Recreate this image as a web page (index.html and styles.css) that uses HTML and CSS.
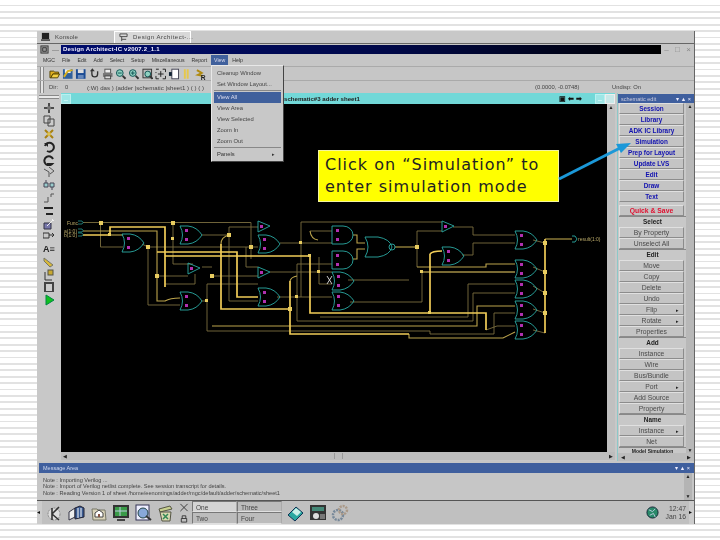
FILE: index.html
```html
<!DOCTYPE html>
<html lang="en">
<head>
<meta charset="utf-8">
<title>Design Architect-IC</title>
<link rel="stylesheet" href="styles.css">
</head>
<body>
<div class="window">
  <div class="tabs">
    <div class="tab"><svg class="ico" viewBox="0 0 10 10"><rect x="1" y="1" width="8" height="7" fill="#222"/><rect x="0" y="8" width="10" height="2" fill="#555"/></svg><span>Konsole</span></div>
    <div class="tab active"><svg class="ico" viewBox="0 0 10 10"><path d="M1 1h8v3H1zM3 4v5M3 7h5" fill="none" stroke="#444"/></svg><span>Design Architect-...</span></div>
  </div>
  <div class="titlebar">
    <svg class="ico" viewBox="0 0 10 10"><rect x="1" y="1" width="8" height="8" fill="#999" stroke="#333"/><path d="M3 3h4v4H3z" fill="none" stroke="#333"/></svg>
    <span class="dash">—</span>
    <div class="title">Design Architect-IC v2007.2_1.1</div>
    <div class="winbtns"><span>–</span><span>□</span><span>×</span></div>
  </div>
  <div class="menubar">
    <span>MGC</span><span>File</span><span>Edit</span><span>Add</span><span>Select</span><span>Setup</span><span>Miscellaneous</span><span>Report</span><span class="on">View</span><span>Help</span>
  </div>
  <div class="toolbar">
    <i class="grip"></i>
    <svg class="tool" viewBox="0 0 12 12"><path d="M1 3h4l1 1h4v2H4L2 10H1z" fill="#e0b020" stroke="#554400"/><path d="M4 6h7l-2 4H2z" fill="#f4d040" stroke="#554400"/></svg>
    <svg class="tool" viewBox="0 0 12 12"><rect x="1" y="1" width="10" height="10" fill="#30609c"/><rect x="3" y="1" width="6" height="4" fill="#eee"/><path d="M2 9l4-6 5-1" stroke="#d8b020" stroke-width="2" fill="none"/></svg>
    <svg class="tool" viewBox="0 0 12 12"><rect x="1" y="1" width="10" height="10" fill="#1c4c94"/><rect x="3" y="1" width="6" height="4" fill="#ddd"/><rect x="3" y="7" width="6" height="4" fill="#6688bb"/></svg>
    <svg class="tool" viewBox="0 0 12 12"><path d="M3 2v4a3 3 0 1 0 6 0V3" fill="none" stroke="#333" stroke-width="1.4"/><path d="M1 3h5L3.500 0z" fill="#333"/></svg>
    <svg class="tool" viewBox="0 0 12 12"><rect x="3" y="1" width="6" height="4" fill="#eee" stroke="#555"/><rect x="1" y="5" width="10" height="4" fill="#777"/><rect x="3" y="8" width="6" height="3" fill="#ddd" stroke="#444"/></svg>
    <svg class="tool" viewBox="0 0 12 12"><circle cx="5" cy="5" r="3.500" fill="#8fd0c0" stroke="#155"/><path d="M8 8l3 3" stroke="#333" stroke-width="2"/><path d="M3 5h4" stroke="#155"/></svg>
    <svg class="tool" viewBox="0 0 12 12"><circle cx="5" cy="5" r="3.500" fill="#8fd0c0" stroke="#155"/><path d="M8 8l3 3" stroke="#333" stroke-width="2"/><path d="M3 5h4M5 3v4" stroke="#155"/></svg>
    <svg class="tool" viewBox="0 0 12 12"><rect x="1" y="1" width="9" height="9" fill="#bbb" stroke="#333"/><circle cx="6" cy="6" r="3" fill="#8fd0c0" stroke="#155"/><path d="M8 8l3 3" stroke="#333" stroke-width="2"/></svg>
    <svg class="tool" viewBox="0 0 12 12"><path d="M1 1h3M8 1h3v3M11 8v3H8M4 11H1V8M1 4v1" fill="none" stroke="#222"/><path d="M6 3v6M3 6h6" stroke="#222"/></svg>
    <svg class="tool" viewBox="0 0 12 12"><rect x="4" y="1" width="7" height="10" fill="#fff" stroke="#445"/><path d="M1 4h3v4H1z" fill="#123"/></svg>
    <svg class="tool" viewBox="0 0 12 12"><path d="M4 1v10M7 1v10" stroke="#e6c84a" stroke-width="2"/></svg>
    <svg class="tool" viewBox="0 0 12 12"><path d="M2 2l5 3-4 2 5 1" fill="none" stroke="#b08a10" stroke-width="2"/><text x="6" y="12" class="r">R</text></svg>
  </div>
  <div class="statusbar">
    <i class="grip"></i>
    <span class="dir">Dir:</span><span class="zero">0</span><span class="path">(:W) das ) (adder |schematic |sheet1 ) ( ) ( )</span>
    <span class="coords">(0.0000, -0.0748)</span><span class="undo">Undisp: On</span>
  </div>
  <div class="main">
    <div class="iconbar">
      <div class="handle"></div>
      <svg class="vtool" viewBox="0 0 12 12"><path d="M6 1v10M1 6h10" stroke="#222" stroke-width="1.500"/><circle cx="6" cy="6" r="2" fill="#777"/></svg>
      <svg class="vtool" viewBox="0 0 12 12"><path d="M1 1h6v7H1zM5 4h6v7H5z" fill="#ccc" stroke="#444"/></svg>
      <svg class="vtool" viewBox="0 0 12 12"><path d="M2 2l8 8M10 2l-8 8" stroke="#a88010" stroke-width="2"/><circle cx="6" cy="6" r="2" fill="#dcc050"/></svg>
      <svg class="vtool" viewBox="0 0 12 12"><path d="M2 5a4.500 4.500 0 1 1 2 5" fill="none" stroke="#222" stroke-width="2"/><path d="M1 2h4v4z" fill="#222"/></svg>
      <svg class="vtool" viewBox="0 0 12 12"><path d="M10 5a4.500 4.500 0 1 0-1 5H4" fill="none" stroke="#222" stroke-width="2"/></svg>
      <svg class="vtool" viewBox="0 0 12 12"><path d="M1 3l5 3v5M6 1l5 4-4 3" fill="none" stroke="#555"/></svg>
      <svg class="vtool" viewBox="0 0 12 12"><path d="M1 4h4v4H1zM7 4h4v4H7zM3 1v3M9 8v3" fill="#9cc" stroke="#445"/></svg>
      <svg class="vtool" viewBox="0 0 12 12"><path d="M1 10h4V5M8 2h3M8 5V2" fill="none" stroke="#555"/></svg>
      <svg class="vtool" viewBox="0 0 12 12"><path d="M1 2h9v2H1zM3 8h7v2H3z" fill="#222"/></svg>
      <svg class="vtool" viewBox="0 0 12 12"><path d="M1 5h7v6H1z" fill="#77a" stroke="#334"/><path d="M4 8l6-6M9 1l2 2" stroke="#eee"/></svg>
      <svg class="vtool" viewBox="0 0 12 12"><path d="M0 3h6v5H0zM6 5h5M9 3l2 2-2 2" fill="none" stroke="#333"/></svg>
      <div class="vtext">A≡</div>
      <svg class="vtool" viewBox="0 0 12 12"><path d="M1 2l9 7-3 2-6-6z" fill="#d8b838" stroke="#776"/></svg>
      <svg class="vtool" viewBox="0 0 12 12"><path d="M2 3v8h7" fill="none" stroke="#333"/><rect x="5" y="1" width="5" height="5" fill="#c8a830" stroke="#554"/></svg>
      <svg class="vtool" viewBox="0 0 12 12"><rect x="1" y="1" width="10" height="10" fill="#444"/><rect x="3" y="3" width="6" height="7" fill="#ccc"/></svg>
      <svg class="vtool" viewBox="0 0 12 12"><path d="M3 1l8 5-8 5z" fill="#10c020" stroke="#084"/></svg>
    </div>
    <div class="design">
      <div class="dhead"><span class="minbtn">–</span><span class="dtitle">schematic#3 adder sheet1</span><span class="dctl"><b>▣</b><b>⬅</b><b>➡</b></span><span class="minbtn">–</span><span class="maxbtn"></span></div>
      <div class="dbody">
        <div class="canvas">
<svg class="schem" viewBox="61 105 546 348" aria-hidden="true">
  <defs>
    <g id="or"><path class="g" d="M0 0H8Q17 1 22 9Q17 17 8 18H0Q5 9 0 0Z"/><rect class="p" x="5" y="3" width="3" height="3"/><rect class="p" x="5" y="12" width="3" height="3"/></g>
    <g id="and"><path class="g" d="M0 0H11A10 9 0 0 1 11 18H0Z"/><rect class="p" x="4" y="3" width="3" height="3"/><rect class="p" x="4" y="12" width="3" height="3"/></g>
    <g id="buf"><path class="g" d="M0 0L12 5L0 11Z"/><rect class="p" x="2" y="4" width="3" height="3"/></g>
  </defs>
  <g class="thin">
    <path d="M83 223.500H251V260"/><path d="M100.500 223.500V248H123"/><path d="M173 224V265H193"/>
    <path d="M142 245L148 248V306H180"/><path d="M148 248H258"/><path d="M202 236H229M229 228V302H258M229 228H258"/>
    <path d="M202 268H212"/><path d="M157 277H188"/><path d="M165 285H195V275"/><path d="M212 277H258"/>
    <path d="M270 273H332"/><path d="M246 248V268H258"/><path d="M277 298H332"/><path d="M297 265V322H473"/><path d="M297 265H332"/>
    <path d="M202 302H208"/><path d="M207 285V332H430V335H494V314H515"/><path d="M207 285H258"/>
    <path d="M280 244H332"/><path d="M301 223V298"/><path d="M301 223H442"/><path d="M310 232H332"/>
    <path d="M319 258V285H332"/>
    <path d="M348 281H409"/><path d="M417 232V268"/><path d="M417 232H442"/>
    <path d="M453 228H473V236H515"/><path d="M462 256H473V244H515"/>
    <path d="M350 303H422V273H515"/><path d="M320 318H468V285H515"/><path d="M473 322V294H515"/>
    <path d="M533 241L545 244M533 268L545 273M533 287L545 294M533 310L545 314M533 331L545 334"/>
    <path d="M486 331L497 327H515"/>
    <path class="x" d="M327 277l5 8m-5 0l5-8"/>
  </g>
  <g class="mid">
    <path d="M83 232H157V302H165Q170 299 180 299"/>
    <path d="M212 327H477V307H515"/>
    <path d="M417 268H486V265H515"/><path d="M353 236H357V244H365M353 260H357V250H365"/>
    <path d="M395 248H417"/>
    <path d="M229 236Q221 238 221 245"/><path d="M290 282Q291 278 297 277"/>
    <path d="M409 335V339H503L515 333"/>
    <path d="M545 240H572"/>
    <path d="M109 236H123"/><path d="M422 273H515"/>
    <path d="M310 232Q311 240 318 241"/>
  </g>
  <g class="thick">
    <path d="M83 236H110V228H165V288"/><path d="M157 253H237V298H258"/><path d="M165 257H310V314H486V331"/>
    <path d="M221 245V310H290"/><path d="M290 282V335H409"/><path d="M430 255V314"/><path d="M430 255Q432 252 442 252"/>
    <path d="M545 240V334"/>
  </g>
  <g class="dots">
    <rect x="99" y="222" width="4" height="4"/><rect x="171" y="222" width="4" height="4"/><rect x="108" y="234" width="3" height="3"/><rect x="171" y="238" width="3" height="3"/>
    <rect x="146" y="246" width="4" height="4"/><rect x="227" y="234" width="4" height="4"/><rect x="249" y="246" width="4" height="4"/><rect x="155" y="275" width="4" height="4"/>
    <rect x="210" y="275" width="4" height="4"/><rect x="205" y="300" width="3" height="3"/><rect x="295" y="296" width="3" height="3"/><rect x="299" y="242" width="3" height="3"/>
    <rect x="288" y="308" width="4" height="4"/><rect x="317" y="271" width="3" height="3"/><rect x="308" y="255" width="3" height="3"/>
    <rect x="415" y="246" width="4" height="4"/><rect x="420" y="271" width="3" height="3"/><rect x="428" y="312" width="3" height="3"/>
    <rect x="543" y="242" width="4" height="4"/><rect x="543" y="271" width="4" height="4"/><rect x="543" y="292" width="4" height="4"/><rect x="543" y="312" width="4" height="4"/>
  </g>
  <g class="bufpin"><path d="M78 222h4l1 1.500-1 1.500h-4M78 230h4l1 1.500-1 1.500h-4M78 234h4l1 1.500-1 1.500h-4"/></g>
  <text class="lbl" x="67" y="226">Func</text><text class="lbl" x="64" y="233.500">a(1:0)</text><text class="lbl" x="64" y="238">b(1:0)</text>
  <use href="#or" x="122" y="235"/><use href="#or" x="180" y="227"/><use href="#or" x="180" y="293"/>
  <use href="#buf" x="188" y="264"/><use href="#buf" x="258" y="222"/><use href="#or" x="258" y="236"/>
  <use href="#buf" x="258" y="268"/><use href="#or" x="258" y="289"/>
  <use href="#and" x="332" y="227"/><use href="#and" x="332" y="252"/><use href="#or" x="332" y="273"/><use href="#or" x="332" y="293"/>
  <path class="g" d="M365 238H378Q390 240 392 248Q390 256 378 258H365Q371 248 365 238Z"/><circle class="g" cx="392" cy="248" r="3"/>
  <use href="#buf" x="442" y="222"/><use href="#or" x="442" y="248"/>
  <use href="#or" x="515" y="232"/><use href="#or" x="515" y="261"/><use href="#or" x="515" y="281"/><use href="#or" x="515" y="302"/><use href="#or" x="515" y="322"/>
  <path class="g" d="M572 237h3l2 3-2 3h-3"/>
  <text class="lbl" x="578" y="242">result(1:0)</text>
</svg>
        </div>
        <div class="vscroll"><b>▲</b><i></i></div>
      </div>
      <div class="hscroll"><b>◀</b><i></i><b>▶</b></div>
    </div>
    <div class="palette">
      <div class="phead"><span>schematic edit</span><em>▾ ▲ ×</em></div>
      <div class="pbody">
        <div class="plist">
          <div class="btn blue">Session</div><div class="btn blue">Library</div><div class="btn blue">ADK IC Library</div><div class="btn blue">Simulation</div><div class="btn blue">Prep for Layout</div><div class="btn blue">Update LVS</div><div class="btn blue">Edit</div><div class="btn blue">Draw</div><div class="btn blue">Text</div>
          <div class="btn red">Quick &amp; Save</div>
          <div class="sect">Select</div>
          <div class="btn">By Property</div><div class="btn">Unselect All</div>
          <div class="sect">Edit</div>
          <div class="btn">Move</div><div class="btn">Copy</div><div class="btn">Delete</div><div class="btn">Undo</div><div class="btn more">Flip</div><div class="btn more">Rotate</div><div class="btn">Properties</div>
          <div class="sect">Add</div>
          <div class="btn">Instance</div><div class="btn">Wire</div><div class="btn">Bus/Bundle</div><div class="btn more">Port</div><div class="btn">Add Source</div><div class="btn">Property</div>
          <div class="sect">Name</div>
          <div class="btn more">Instance</div><div class="btn">Net</div>
          <div class="sect cut">Model Simulation</div>
        </div>
        <div class="pscroll"><b>▲</b><i></i><b>▼</b></div>
      </div>
      <div class="phscroll"><b>◀</b><i></i><b>▶</b></div>
    </div>
  </div>
  <div class="msghead"><span>Message Area</span><em>▾ ▲ ×</em></div>
  <div class="msgs">
    <div class="msgtext">
      <div>Note : Importing Verilog ...</div>
      <div>Note : Import of Verilog netlist complete. See session transcript for details.</div>
      <div>Note : Reading Version 1 of sheet /home/eenomings/adder/mgc/default/adder/schematic/sheet1</div>
    </div>
    <div class="mscroll"><b>▲</b><i></i><b>▼</b></div>
  </div>
  <div class="taskbar">
    <i class="tgrip">◂</i>
    <svg class="tk" viewBox="0 0 18 18"><circle cx="8" cy="10" r="6" fill="#ddd" stroke="#888" stroke-dasharray="2 1"/><path d="M6 4v12M6 10l7-7M6 10l7 6" stroke="#333" stroke-width="1.600"/></svg>
    <svg class="tk" viewBox="0 0 18 18"><path d="M1 8l6-4v9l-6 3z" fill="#eee" stroke="#334"/><path d="M7 4l5-2 4 2v9l-9 2z" fill="#3a5a90" stroke="#223"/><path d="M10 4v10M13 4v9" stroke="#fff"/></svg>
    <svg class="tk" viewBox="0 0 18 18"><path d="M2 5h5l1 1h7l1 10H3z" fill="#d8d2b8" stroke="#776"/><path d="M5 13V9l4-3 4 3v4z" fill="#fff" stroke="#444"/><rect x="8" y="10" width="2" height="3" fill="#854"/></svg>
    <svg class="tk" viewBox="0 0 18 18"><rect x="1" y="1" width="16" height="13" fill="#333"/><rect x="3" y="3" width="12" height="9" fill="#3a9a48"/><path d="M8 3v9M3 7h12" stroke="#bcd"/><rect x="5" y="15" width="8" height="2" fill="#444"/></svg>
    <svg class="tk" viewBox="0 0 18 18"><rect x="2" y="1" width="13" height="15" fill="#eef" stroke="#335"/><circle cx="9" cy="9" r="5" fill="#88a8d8" stroke="#244"/><path d="M12 12l5 4" stroke="#333" stroke-width="2"/></svg>
    <svg class="tk" viewBox="0 0 18 18"><path d="M3 5l11-3 2 3-12 3z" fill="#c8d090" stroke="#554"/><path d="M4 8h11l-1 9H6z" fill="#d8d8b0" stroke="#554"/><path d="M7 10l5 5M12 10l-5 5" stroke="#385" stroke-width="1.500"/></svg>
    <div class="tkmini"><svg viewBox="0 0 10 10"><path d="M1 1l8 8M9 1L1 9" stroke="#333"/></svg><svg viewBox="0 0 10 10"><path d="M2 5h6v4H2zM3 5V2h4v3" fill="none" stroke="#333"/></svg></div>
    <div class="pager"><div class="pg sel">One</div><div class="pg">Three</div><div class="pg">Two</div><div class="pg">Four</div></div>
    <svg class="tk gapb" viewBox="0 0 18 18"><path d="M1 11l8-8 7 6-8 8z" fill="#28a8a0" stroke="#135"/><path d="M5 8l4-4 5 4-4 4z" fill="#c8f0e8"/></svg>
    <svg class="tk" viewBox="0 0 18 18"><rect x="1" y="1" width="16" height="15" fill="#333"/><rect x="3" y="3" width="12" height="4" fill="#487"/><circle cx="7" cy="12" r="3" fill="#ddd"/><rect x="11" y="10" width="5" height="5" fill="#777"/></svg>
    <svg class="tk" viewBox="0 0 18 18"><circle cx="7" cy="11" r="5" fill="none" stroke="#789" stroke-width="2.500" stroke-dasharray="2 1"/><circle cx="12" cy="6" r="4" fill="none" stroke="#a98" stroke-width="2.500" stroke-dasharray="2 1"/></svg>
    <div class="tray">
      <svg class="globe" viewBox="0 0 14 14"><circle cx="7" cy="7" r="6" fill="#2a8a6a" stroke="#123"/><path d="M3 4l4 2 3-3M4 10l4-2 2 4" stroke="#bcd" fill="none"/></svg>
      <div class="clock">12:47<br>Jan 16</div>
      <i class="tgrip">▸</i>
    </div>
  </div>
</div>
<div class="callout">Click on “Simulation” to<br>enter simulation mode</div>
<svg class="arrow" viewBox="0 0 720 540" aria-hidden="true"><path d="M559 179L622 147" stroke="#1b98d8" stroke-width="3" fill="none"/><path d="M631 143L616 144L621 153Z" fill="#1b98d8"/></svg>
<div class="menu">
  <div class="mi">Cleanup Window</div>
  <div class="mi">Set Window Layout...</div>
  <hr>
  <div class="mi hi">View All</div>
  <div class="mi">View Area</div>
  <div class="mi">View Selected</div>
  <div class="mi">Zoom In</div>
  <div class="mi">Zoom Out</div>
  <hr>
  <div class="mi sub">Panels<b>▸</b></div>
</div>
</body>
</html>
```
FILE: styles.css
```css
* { box-sizing: border-box; }
html, body { margin: 0; height: 540px; overflow: hidden; }
body {
  position: relative;
  padding: 31px 25px 16px 37px;
  background: repeating-linear-gradient(#fff 0, #fff 4.6px, #e2e2e2 4.6px, #e2e2e2 6.4px);
  font-family: "Liberation Sans", sans-serif;
  font-size: 7px;
  color: #333;
}
.window {
  width: 658px;
  height: 493px;
  background: #c6c6c6;
  display: flex;
  flex-direction: column;
  filter: blur(0.5px);
  border-right: 1px solid #666;
}
.ico { width: 9px; height: 9px; flex: none; }
.tabs { height: 13px; display: flex; border-bottom: 1px solid #666; background: #c8c8c8; }
.tab { width: 77px; display: flex; align-items: center; gap: 5px; padding: 0 4px; color: #444; font-size: 6px; white-space: nowrap; letter-spacing: .2px; }
.tab.active { background: #d8d8d8; border: 1px solid #fff; border-bottom: 0; letter-spacing: .5px; }
.titlebar { height: 10px; display: flex; align-items: center; padding-left: 3px; margin-top: 1px; }
.dash { width: 13px; text-align: center; color: #777; }
.title {
  flex: 1;
  height: 9px;
  line-height: 9px;
  margin-left: -1px;
  padding-left: 2px;
  background: linear-gradient(90deg, #000c6c, #000848 55%, #000 100%);
  color: #eef;
  font-weight: bold;
  font-size: 6px;
  letter-spacing: .2px;
}
.winbtns { width: 33px; display: flex; justify-content: space-around; color: #888; font-size: 8px; line-height: 9px; }
.menubar { height: 13px; display: flex; align-items: center; gap: 7px; padding-left: 6px; border-bottom: 1px solid #aaa; font-size: 5.2px; color: #333; }
.menubar .on { background: #40609c; color: #dde; padding: 2px 3px; margin: 0 -3px; }
.toolbar { height: 15px; display: flex; align-items: center; gap: 1.750px; padding-left: 3px; border-bottom: 1px solid #aaa; }
.grip { width: 4px; height: 13px; border-left: 1px solid #888; border-right: 1px solid #888; background: #e4e4e4; margin-right: 3px; flex: none; }
.tool { width: 11.500px; height: 12px; flex: none; }
.r { font: bold 7px "Liberation Sans", sans-serif; fill: #222; }
.statusbar { height: 12px; display: flex; align-items: center; padding-left: 3px; font-size: 5.8px; color: #444; }
.statusbar .grip { margin-right: 5px; }
.dir { width: 16px; }
.zero { width: 22px; }
.path { width: 448px; white-space: nowrap; font-size: 6.100px; }
.coords { width: 77px; }
.undo { white-space: nowrap; }
.main { height: 368px; display: flex; background: #c8c8c8; }
.iconbar { width: 24px; display: flex; flex-direction: column; align-items: center; flex: none; padding-top: 2px; }
.handle { width: 20px; height: 4px; border: 1px solid #888; border-left: 0; border-right: 0; background: #e8e8e8; margin-bottom: 3px; }
.vtool { width: 12px; height: 12px; margin-bottom: .8px; flex: none; }
.vtext { height: 12.800px; line-height: 13px; font-weight: bold; font-size: 9px; color: #222; }
.design { width: 554px; display: flex; flex-direction: column; flex: none; }
.dhead { height: 11px; background: #72d8d8; display: flex; align-items: center; }
.minbtn { width: 10px; height: 10px; line-height: 9px; text-align: center; background: #9ee6e6; color: #e8ffff; border: 1px solid #b8f0f0; flex: none; }
.dtitle { margin-left: 213px; width: 285px; font-weight: bold; font-size: 6.100px; color: #222; white-space: nowrap; }
.dctl { width: 36px; display: flex; gap: 2px; font-size: 7px; color: #111; flex: none; }
.maxbtn { width: 10px; height: 10px; background: #c8e8e8; border: 1px solid #eee; flex: none; }
.dbody { height: 348px; display: flex; }
.canvas { width: 546px; background: #000; flex: none; }
.schem { display: block; width: 546px; height: 348px; }
.g { fill: none; stroke: #2aaaa4; stroke-width: .9; }
.p { fill: #b030b0; }
.thin { fill: none; stroke: #7c6e40; stroke-width: .9; }
.x { stroke: #ddd; }
.mid { fill: none; stroke: #bca44c; stroke-width: 1.100; }
.thick { fill: none; stroke: #f0cc58; stroke-width: 1.700; }
.dots { fill: #e8cc60; }
.bufpin { fill: none; stroke: #2aaaa4; stroke-width: .7; }
.lbl { font: 5px "Liberation Sans", sans-serif; fill: #b8a868; }
.vscroll { flex: 1; background: #c0c0c0; display: flex; flex-direction: column; align-items: center; font-size: 5px; color: #222; }
.vscroll b { font-weight: normal; height: 8px; }
.hscroll { height: 8px; display: flex; align-items: center; justify-content: space-between; padding: 0 2px; font-size: 5px; background: #bcbcbc; color: #222; }
.hscroll b { font-weight: normal; }
.hscroll i { width: 9px; height: 6px; border-left: 1px solid #999; border-right: 1px solid #999; }
.palette { width: 77px; margin-left: 2px; flex: none; display: flex; flex-direction: column; border-left: 1px solid #8cc8c8; }
.phead { height: 9px; margin-top: 1px; background: #3f5f9e; color: #ccd; display: flex; justify-content: space-between; align-items: center; padding: 0 3px; font-size: 5.500px; white-space: nowrap; }
.phead em, .msghead em { font-style: normal; color: #eef; }
.pbody { flex: 1; display: flex; min-height: 0; overflow: hidden; }
.plist { width: 68px; padding-left: 1px; overflow: hidden; flex: none; }
.btn {
  height: 11px;
  width: 65px;
  line-height: 10px;
  text-align: center;
  background: #c4c4c4;
  border: 1px solid;
  border-color: #e0e0e0 #8c8c8c #8c8c8c #e0e0e0;
  font-size: 6.800px;
  color: #4a4a4a;
  position: relative;
  white-space: nowrap;
}
.btn.blue { color: #1010b0; font-weight: bold; font-size: 6.400px; }
.btn.red { color: #e01030; font-weight: bold; margin: 3px 0 0; }
.btn.more::after { content: "▸"; position: absolute; right: 4px; top: 0; font-size: 5px; color: #222; }
.sect { height: 11px; line-height: 10px; text-align: center; font-weight: bold; font-size: 6.400px; color: #222; border-top: 1px solid #888; }
.sect.cut { height: 7px; line-height: 7px; overflow: hidden; font-size: 5px; }
.pscroll { width: 8px; background: #b8b8b8; display: flex; flex-direction: column; justify-content: space-between; align-items: center; font-size: 5px; color: #222; }
.pscroll b { font-weight: normal; }
.phscroll { height: 8px; display: flex; justify-content: space-between; align-items: center; padding: 0 3px; background: #bcbcbc; font-size: 5px; color: #222; }
.phscroll b { font-weight: normal; }
.msghead { height: 10px; margin: 2px 0 0 2px; background: #3f5f9e; color: #cfd8ee; display: flex; justify-content: space-between; align-items: center; padding: 0 4px; font-size: 5.500px; }
.msgs { height: 29px; display: flex; border-bottom: 1px solid #555; }
.msgtext { flex: 1; padding: 4px 0 0 6px; font-size: 5.600px; line-height: 6.500px; color: #444; white-space: nowrap; }
.mscroll { width: 8px; margin-right: 2px; background: #b4b4b4; display: flex; flex-direction: column; justify-content: space-between; align-items: center; font-size: 5px; color: #222; padding-bottom: 1px; }
.mscroll b { font-weight: normal; }
.taskbar { flex: 1; display: flex; align-items: center; background: #c0c0c0; }
.tgrip { width: 5px; height: 100%; background: #ccc; font-style: normal; font-size: 6px; line-height: 22px; flex: none; color: #111; }
.tk { width: 18px; height: 18px; margin-left: 4px; flex: none; }
.tkmini { width: 10px; margin-left: 5px; display: flex; flex-direction: column; gap: 2px; flex: none; }
.tkmini svg { display: block; width: 10px; height: 9px; }
.pager { width: 90px; height: 23px; margin-left: 3px; display: grid; grid-template-columns: 45px 45px; grid-template-rows: 11px 12px; flex: none; }
.pg { padding-left: 3px; line-height: 11px; font-size: 6.500px; color: #444; border: 1px solid; border-color: #777 #aaa #e0e0e0 #777; background: #bcbcbc; }
.pg.sel { background: #d4d4d4; }
.gapb { margin-left: 5px; }
.tray { margin-left: auto; display: flex; align-items: center; height: 100%; }
.globe { width: 13px; height: 13px; margin-right: 4px; }
.clock { width: 23px; text-align: right; line-height: 8px; font-size: 6.800px; color: #444; margin-right: 3px; }
.callout {
  position: absolute;
  left: 318px;
  top: 150px;
  width: 241px;
  height: 52px;
  padding: 3px 0 0 6px;
  background: #ffff00;
  border: 1px solid #f4f4a0;
  font-family: "DejaVu Sans", sans-serif;
  font-size: 16px;
  letter-spacing: 1px;
  line-height: 22px;
  color: #222;
  white-space: nowrap;
}
.arrow { position: absolute; left: 0; top: 0; width: 720px; height: 540px; pointer-events: none; }
.menu {
  position: absolute;
  left: 211px;
  top: 65px;
  width: 73px;
  height: 97px;
  padding: 2px;
  background: #c8c8c8;
  border: 1px solid;
  border-color: #e8e8e8 #444 #444 #e8e8e8;
  font-size: 5.800px;
  color: #444;
  filter: blur(0.4px);
}
.mi { height: 11px; line-height: 11px; padding-left: 3px; white-space: nowrap; }
.mi.hi { background: #40609c; color: #dde; }
.menu hr { margin: 0; border: 0; border-top: 1px solid #888; height: 2px; }
.mi.sub { display: flex; justify-content: space-between; padding-right: 6px; color: #333; }
.mi.sub b { font-weight: normal; font-size: 5px; }
```
